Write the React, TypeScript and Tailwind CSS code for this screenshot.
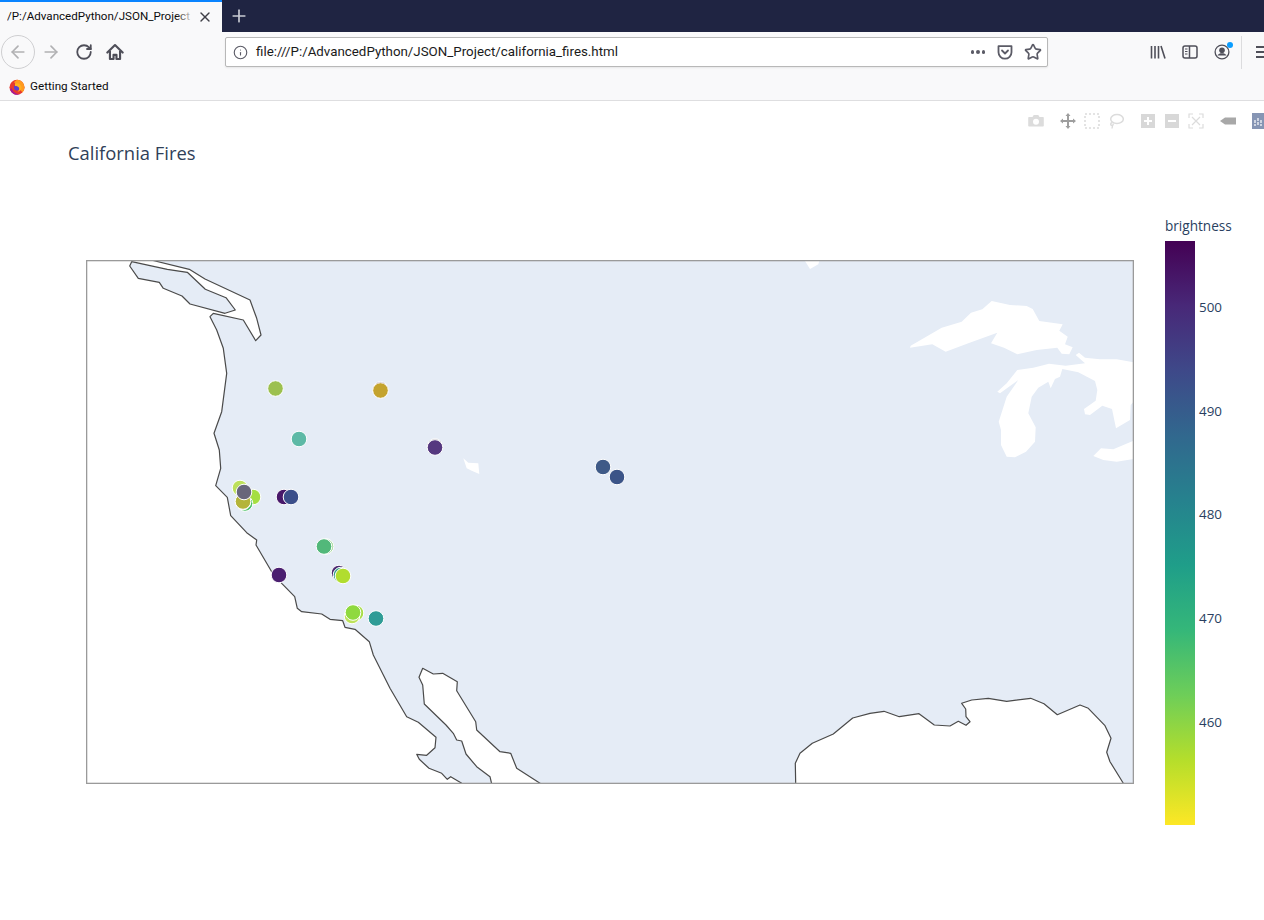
import { ArrowLeft, ArrowRight, Info, Plus, RotateCw, Star, X } from 'lucide-react';
import type { ReactNode } from 'react';

const COAST =
  '151,260 189.3,269.3 205,279 250,300 256.7,318.3 261,335 255.7,340.7 243.3,320 213.3,313.3 210,316.7 216.7,330 223.3,348.3 226.7,373.3 221.7,411.7 214,433.3 219.3,450 220.7,468.3 215.7,485.7 227.3,497.3 230.7,515.7 246.7,532.7 256.7,540 256,545 271.7,571.7 281.7,583.3 294.7,596.7 297.3,608.3 301.7,611.7 321.7,614 330,619.3 342.7,620.7 345,627.3 355,629.3 369.3,641.7 373.3,655 390,688.3 406.7,716.7 418.3,722.3 436,737.3 435,747.7 426.7,755.3 416.7,754.3 419.3,759.3 429,768.3 441.7,773.3 447.3,779.3 450.7,776.7 461.7,783.3 463,784';
const ISLAND =
  '131.7,261.7 129.7,266 138.3,278.3 159.3,282.3 163.3,288.3 182,296 190,304 225,313.3 235.3,310 226,297.7 205.3,289.3 187.3,272.3 167.3,269.3';
const GULF =
  '491.7,784 490,776.7 476.7,766.7 466,754 461.7,741 456.7,740 453.3,733.3 446,725 424.3,704 422.7,685 419,677.3 422.7,668.3 433.3,674 442.7,673.3 457.3,681.7 456.7,690.7 475.7,721.7 476.7,730 500,751.7 510.7,753.3 516.7,768.3 540,783.3 541,784';
const MEXICO =
  '795.7,784 795.3,763.3 800,753.3 812.3,743.3 833.3,734 852.7,718 870,713.3 884,711.3 899.3,716.7 919,713.7 934.3,725 950,726 958.3,721.3 966,725.3 970,721.7 966,716.7 965.7,709 961.7,703.3 971.7,700 988.3,698.3 1006.7,701.3 1030.7,698.3 1044,703.7 1057.3,714.7 1080,705 1088.3,708.3 1105,725.7 1111,738.3 1106.7,752.3 1110,761.7 1123.3,783.3 1124,784';
const LAKES = [
  '910,347.7 910.7,345.7 941.7,327.7 961.7,321.7 971,312.7 982.3,309.3 991.7,301 1010,305 1026.7,306 1032.7,309 1039.3,321 1062.7,324.3 1059.3,330.7 1067.7,336.7 1065,344.3 1072.7,347.3 1069.3,354.3 1061.7,353.7 1057.3,347.7 1036.7,350 1017.3,354.3 1004,347.7 991,343.3 997.3,332.7 968.3,343.3 945.7,351.7 932.3,344.3',
  '997.3,391.7 1006.7,383.3 1017.3,370 1033.3,367.7 1049,363.7 1065.7,365.7 1085,363.3 1075.7,355 1079,352.7 1085,357.7 1100,359.3 1116.7,359.3 1133.5,362.3 1133.5,401.7 1130.7,405 1130,420 1116,428.3 1112,409 1102.3,405.7 1090,415 1085,414.3 1084,409 1095.7,400.7 1097.3,390 1095,381 1078.3,372.3 1062.3,369 1060,376.7 1055,379 1050.7,388.3 1048.3,381.7 1038.3,387.7 1031.7,396.7 1028.3,413.3 1035.7,427.3 1035,441.7 1026,451.7 1015,457.3 1006.7,456.7 1001,445 1001,430 998.7,421.7 1006.7,396.7 1018.3,380 1000,393.3',
  '1093.3,456 1101,448.3 1113.3,449.3 1133.5,440.7 1133.5,459 1116.7,461.7 1103.3,460',
  '463.3,458.3 468.3,462.7 478.3,463.3 479.3,474 471.7,470.7 466.7,468.3',
  '805,261 819.3,261 818.3,264.3 810,269',
];

// drawn in order, later fires sit on top of earlier ones
const FIRES: [number, number, string][] = [
  [275.5, 388.5, '#9cc04f'],
  [380.5, 389.5, '#8a6f8e'],
  [380.5, 390.5, '#c4a32e'],
  [299, 439, '#5db9a6'],
  [435, 446.5, '#8a8a92'],
  [435, 447.5, '#55387f'],
  [603, 467, '#3f5a87'],
  [617, 477, '#3b5488'],
  [240, 488, '#bde05a'],
  [253, 497, '#a5de42'],
  [245, 503.5, '#4ec26a'],
  [243, 502, '#8a8aa0'],
  [243, 501.5, '#b4b43a'],
  [244, 492, '#68667a'],
  [284, 497, '#48186a'],
  [291, 497, '#3b4e8a'],
  [326, 546.5, '#a9d9a0'],
  [324, 546.5, '#52b87a'],
  [339, 573, '#4b2a72'],
  [341, 575, '#3aa08a'],
  [343, 576, '#b1dd2f'],
  [279, 575, '#4b1f70'],
  [356, 613, '#a8dd48'],
  [352, 616, '#bde25a'],
  [353, 612.5, '#8fd93f'],
  [376, 618.5, '#2f9c96'],
];

const TICKS = ['500', '490', '480', '470', '460'];

function HomeIcon() {
  return (
    <svg width="18" height="18" viewBox="0 0 16 16" fill="none" stroke="#4f4f59" strokeWidth="1.9" strokeLinejoin="round">
      <path d="M1.2 8.5L8 1.8l6.8 6.7" strokeLinecap="round" />
      <path d="M3.5 7v7.2h3.2v-3.7h2.6v3.7h3.2V7" />
    </svg>
  );
}

function Pocket() {
  return (
    <svg width="16" height="16" viewBox="0 0 16 16" fill="none" stroke="#5b5b66" strokeWidth="1.8">
      <path d="M1.5 2.2h13v6a6.5 6.5 0 0 1-13 0z" strokeLinejoin="round" />
      <path d="M5 6.5l3 3 3-3" strokeLinecap="round" strokeLinejoin="round" />
    </svg>
  );
}

function Library() {
  return (
    <svg width="16" height="16" viewBox="0 0 16 16" fill="none" stroke="#4f4f59" strokeWidth="1.6">
      <path d="M1.5 2v12.5M5 2v12.5M8.5 2v12.5M11 2l4 12.5" />
    </svg>
  );
}

function Sidebar() {
  return (
    <svg width="16" height="16" viewBox="0 0 16 16" fill="none" stroke="#4f4f59" strokeWidth="1.5">
      <rect x="1" y="2" width="14" height="12" rx="2" />
      <path d="M7.5 2v12" />
      <path d="M3 5h2.5M3 7.5h2.5M3 10h2.5" strokeWidth="1.2" />
    </svg>
  );
}

function Account() {
  return (
    <svg width="16" height="16" viewBox="0 0 16 16" fill="none">
      <circle cx="8" cy="8" r="6.9" stroke="#4f4f59" strokeWidth="1.3" />
      <circle cx="8" cy="6.3" r="2.8" fill="#4f4f59" />
      <path d="M3.4 11.6c1-1.7 2.6-2.3 4.6-2.3s3.6.6 4.6 2.3z" fill="#4f4f59" />
    </svg>
  );
}

function FirefoxLogo() {
  return (
    <svg width="16" height="16" viewBox="0 0 16 16" className="shrink-0">
      <circle cx="8" cy="8.3" r="7.5" fill="#e8392e" />
      <path d="M8 .8a7.5 7.5 0 0 1 7.5 7.5c0 2-.8 3.8-2 5.1L9 8 5 3z" fill="#ff9a1f" />
      <path d="M1 10.5a7.5 7.5 0 0 0 9.5 4.9C7 15 3.5 13 2.8 9z" fill="#a4199b" />
      <circle cx="8" cy="8.6" r="3" fill="#5a3fd0" />
      <path d="M6 4.5c2.5-1 6 .5 6.5 3.5.3 2.500-1.500 4.500-4 4.700 1.500-1 2-2.500 1.500-3.900C9.500 7.500 8 7 6 7z" fill="#ffb01f" />
    </svg>
  );
}

function ModeIcon({ children, className }: { children: ReactNode; className: string }) {
  return (
    <svg width="16" height="16" viewBox="0 0 16 16" className={`shrink-0 ${className}`}>
      {children}
    </svg>
  );
}

function ModeBar() {
  return (
    <div className="flex h-[16px] items-center overflow-hidden pl-[1028px]">
      <ModeIcon className="text-[#dcdcdc]">
        <path d="M1 4h3.5l1.2-2h4.6l1.2 2H15a.8.8 0 0 1 .8.8v8a.8.8 0 0 1-.8.8H1a.8.8 0 0 1-.8-.8v-8A.8.8 0 0 1 1 4zm7 1.800a3 3 0 1 0 0 6 3 3 0 0 0 0-6z" fill="currentColor" fillRule="evenodd" />
      </ModeIcon>
      <ModeIcon className="ml-[16px] text-[#9e9e9e]">
        <path d="M8 0l2.500 3H9v4h4V5.500L16 8l-3 2.500V9H9v4h1.500L8 16l-2.500-3H7V9H3v1.500L0 8l3-2.500V7h4V3H5.500z" fill="currentColor" />
      </ModeIcon>
      <ModeIcon className="ml-[8px] text-[#dcdcdc]">
        <rect x="1" y="1" width="14" height="14" fill="none" stroke="currentColor" strokeWidth="1.6" strokeDasharray="2 2" />
      </ModeIcon>
      <ModeIcon className="ml-[8px] text-[#dcdcdc]">
        <ellipse cx="9" cy="6" rx="6.3" ry="4.5" fill="none" stroke="currentColor" strokeWidth="1.5" />
        <path d="M4 9.500c-2 1-1.500 3 0 3 1 0 1.500-1 1-2M4.500 12.500L4 15.500" fill="none" stroke="currentColor" strokeWidth="1.4" />
      </ModeIcon>
      <ModeIcon className="ml-[16px] text-[#d8d8d8]">
        <path d="M1 1h14v14H1zM7 4v3H4v2h3v3h2V9h3V7H9V4z" fill="currentColor" fillRule="evenodd" />
      </ModeIcon>
      <ModeIcon className="ml-[8px] text-[#d8d8d8]">
        <path d="M1 1h14v14H1zM4 7v2h8V7z" fill="currentColor" fillRule="evenodd" />
      </ModeIcon>
      <ModeIcon className="ml-[8px] text-[#dcdcdc]">
        <path d="M1 5V1h4M11 1h4v4M15 11v4h-4M5 15H1v-4" fill="none" stroke="currentColor" strokeWidth="1.2" />
        <path d="M4 4l8 8M12 4l-8 8" stroke="currentColor" strokeWidth="1.2" />
      </ModeIcon>
      <ModeIcon className="ml-[16px] text-[#a8a8a8]">
        <path d="M0 8l5-3.500h11v7H5z" fill="currentColor" />
      </ModeIcon>
      <svg width="16" height="16" viewBox="0 0 16 16" className="ml-[16px] shrink-0">
        <rect width="16" height="16" fill="#8695b4" />
        <path d="M3 7v6M6 5v8M9 7v6" stroke="#fff" strokeWidth="1.2" strokeDasharray="3 1" />
      </svg>
    </div>
  );
}

function FireMap() {
  return (
    <svg width="1048" height="524" viewBox="86 260 1048 524" className="mt-[42px] block shrink-0">
      <rect x="86" y="260" width="1048" height="524" fill="#e5ecf6" />
      <polygon points={`86,260 ${COAST} 86,784`} fill="#fff" />
      <polygon points={GULF} fill="#fff" />
      <polygon points={MEXICO} fill="#fff" />
      <g stroke="#4a4a4a" strokeWidth="1.2" fill="none" strokeLinejoin="round">
        <polyline points={COAST} />
        <polygon points={ISLAND} fill="#e5ecf6" />
        <polyline points={GULF} />
        <polyline points={MEXICO} />
      </g>
      {LAKES.map((pts) => (
        <polygon key={pts} points={pts} fill="#fff" />
      ))}
      {FIRES.map(([x, y, color]) => (
        <circle key={`${x}-${y}`} cx={x} cy={y} r="7.8" fill={color} stroke="#fff" strokeWidth="1" />
      ))}
      <rect x="86.5" y="260.5" width="1047" height="523" fill="none" stroke="#9a9a9a" strokeWidth="1.6" />
    </svg>
  );
}

function ColorBar() {
  return (
    <div className="ml-[31px] w-[90px] shrink-0 text-[#2a3f5f] [font-family:'Open_Sans',sans-serif]">
      <div className="h-[23px] text-[13.6px] leading-[16px]">brightness</div>
      <div className="flex">
        <div className="h-[584px] w-[30px] bg-[linear-gradient(to_bottom,#440154,#482878,#3e4989,#31688e,#26828e,#1f9e89,#35b779,#6ece58,#b5de2b,#fde725)]" />
        <div className="ml-[4px] pt-[14px] text-[13.4px]">
          {TICKS.map((t) => (
            <div key={t} className="flex h-[103.8px] items-center">
              {t}
            </div>
          ))}
        </div>
      </div>
    </div>
  );
}

export default function App() {
  return (
    <div className="flex h-[920px] w-[1264px] flex-col overflow-hidden bg-white [font-family:'Roboto',sans-serif]">
      <div className="flex h-[32px] shrink-0 bg-[#1f2442]">
        <div className="relative flex h-[32px] w-[222px] items-center border-t-2 border-[#0a84ff] bg-[#f9f9fa] pl-[7px] text-[11.6px] text-[#0c0c0d]">
          <span className="w-[186px] overflow-hidden whitespace-nowrap">/P:/AdvancedPython/JSON_Project</span>
          <div className="absolute left-[176px] top-0 h-full w-[18px] bg-[linear-gradient(to_right,transparent,#f9f9fa)]" />
          <X size={16} strokeWidth={2} className="ml-[4px] shrink-0 text-[#3f3f46]" />
        </div>
        <div className="flex w-[34px] items-center justify-center">
          <Plus size={20} strokeWidth={2} className="text-[#c9cbd4]" />
        </div>
      </div>

      <div className="flex h-[40px] shrink-0 items-center bg-[#f9f9fa]">
        <div className="ml-[1px] flex h-[34px] w-[34px] shrink-0 items-center justify-center rounded-full border border-[#cfcfd1]">
          <ArrowLeft size={20} strokeWidth={2} className="text-[#b1b1b3]" />
        </div>
        <div className="flex w-[32px] shrink-0 justify-center">
          <ArrowRight size={20} strokeWidth={2} className="text-[#b1b1b3]" />
        </div>
        <div className="ml-[1px] flex w-[32px] shrink-0 justify-center">
          <RotateCw size={18} strokeWidth={2.4} className="text-[#4f4f59]" />
        </div>
        <div className="flex w-[30px] shrink-0 justify-center">
          <HomeIcon />
        </div>
        <div className="ml-[95px] flex h-[30px] w-[823px] shrink-0 items-center rounded-[2px] border border-[#b8b8b8] bg-white shadow-[0_1px_2px_rgba(0,0,0,0.08)]">
          <Info size={15} strokeWidth={1.8} className="ml-[7px] text-[#5b5b66]" />
          <span className="ml-[8px] text-[13.33px] text-[#1a1a1a]">file:///P:/AdvancedPython/JSON_Project/california_fires.html</span>
          <div className="ml-auto flex items-center">
            <div className="flex gap-[2px]">
              <span className="h-[3.5px] w-[3.5px] rounded-full bg-[#5b5b66]" />
              <span className="h-[3.5px] w-[3.5px] rounded-full bg-[#5b5b66]" />
              <span className="h-[3.5px] w-[3.5px] rounded-full bg-[#5b5b66]" />
            </div>
            <div className="ml-[12px]">
              <Pocket />
            </div>
            <Star size={18} strokeWidth={2.2} className="ml-[11px] mr-[5px] text-[#5b5b66]" />
          </div>
        </div>
        <div className="ml-[94px] flex w-[32px] shrink-0 justify-center">
          <Library />
        </div>
        <div className="flex w-[32px] shrink-0 justify-center">
          <Sidebar />
        </div>
        <div className="relative flex w-[32px] shrink-0 justify-center">
          <Account />
          <span className="absolute right-[5px] top-[-2px] h-[6px] w-[6px] rounded-full bg-[#0a9dff]" />
        </div>
        <div className="ml-[3px] h-[33px] w-px shrink-0 bg-[#dcdcde]" />
        <div className="ml-[14px] flex shrink-0 flex-col gap-[3px]">
          <span className="h-[2px] w-[16px] bg-[#4f4f59]" />
          <span className="h-[2px] w-[16px] bg-[#4f4f59]" />
          <span className="h-[2px] w-[16px] bg-[#4f4f59]" />
        </div>
      </div>

      <div className="flex h-[29px] shrink-0 items-center border-b border-[#dedee0] bg-[#f9f9fa] pl-[9px] pt-[1px] text-[11.7px] text-[#0c0c0d]">
        <FirefoxLogo />
        <span className="ml-[5px]">Getting Started</span>
      </div>

      <div className="flex-1">
        <div className="pt-[12px]">
          <ModeBar />
        </div>
        <div className="pl-[68px] pt-[12px] text-[18.4px] leading-[24px] text-[#2f4058] [font-family:'Open_Sans',sans-serif]">
          California Fires
        </div>
        <div className="mt-[53px] flex items-start pl-[86px]">
          <FireMap />
          <ColorBar />
        </div>
      </div>
    </div>
  );
}
